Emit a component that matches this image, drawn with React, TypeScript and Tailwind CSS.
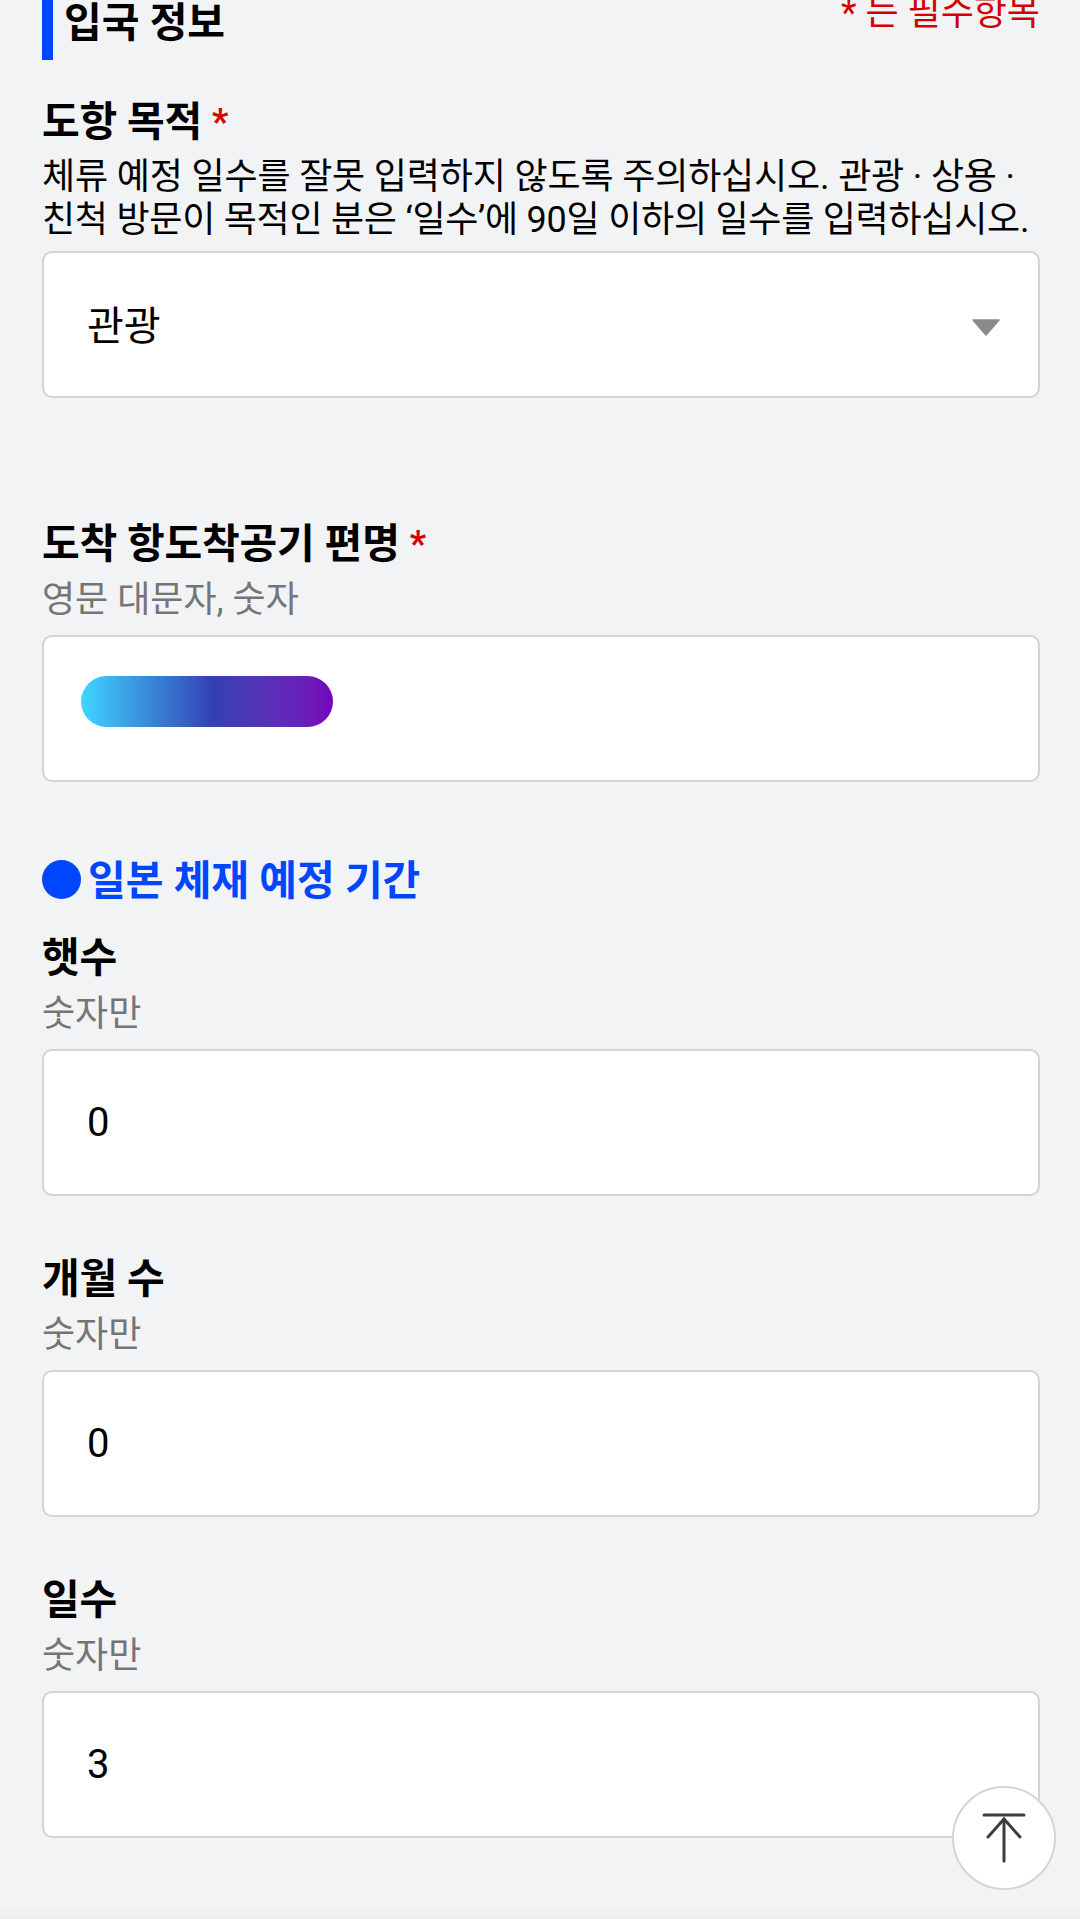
import React from 'react';

function Label({ text, required }: { text: string; required?: boolean }) {
  return (
    <div className="flex items-center h-[52px] pt-[4px] text-[41px] font-bold text-black leading-none tracking-[-0.2px]">
      <span>{text}</span>
      {required && <span className="ml-[10px] text-[36px] text-[#d40000]">*</span>}
    </div>
  );
}

function Hint({ text }: { text: string }) {
  return <div className="h-[44px] mt-[10px] mb-[13px] text-[36px] leading-[44px] text-[#757575]">{text}</div>;
}

function Field({ value, children }: { value?: string; children?: React.ReactNode }) {
  return (
    <div className="flex items-center justify-between h-[147px] pl-[43px] pr-[38px] bg-white border-2 border-[#d4d4d4] rounded-[10px] text-[40px] text-black">
      {value}
      {children}
    </div>
  );
}

export default function App() {
  return (
    <div
      className="relative h-[1919px] w-[1080px] overflow-hidden bg-[#f2f3f5] pl-[42px] pr-[40px]"
      style={{ fontFamily: 'Roboto, "Noto Sans CJK KR", sans-serif' }}
    >
      <div className="flex items-start justify-between h-[60px] mb-[34px]">
        <div className="flex h-[60px] items-start border-l-[11px] border-[#0046ff] pl-[11px]">
          <span className="text-[41px] font-bold leading-[46px] text-black">입국 정보</span>
        </div>
        <span className="text-[36px] leading-[26px] text-[#d40000]">* 는 필수항목</span>
      </div>

      <Label text="도항 목적" required />
      <div className="mb-[9px] pt-[10px] text-[36px] leading-[43px] text-black whitespace-nowrap">
        <div className="tracking-[-0.15px]">체류 예정 일수를 잘못 입력하지 않도록 주의하십시오. 관광 · 상용 ·</div>
        <div className="tracking-[-0.25px]">친척 방문이 목적인 분은 ‘일수’에 90일 이하의 일수를 입력하십시오.</div>
      </div>
      <Field>
        <span className="pt-[5px]">관광</span>
        <svg width="28" height="17" viewBox="0 0 28 17" className="mt-[6px] shrink-0">
          <path d="M1 1h26L14 16z" fill="#8a8a8a" stroke="#8a8a8a" strokeLinejoin="round" strokeWidth="1.5" />
        </svg>
      </Field>

      <div className="mt-[118px]">
        <Label text="도착 항도착공기 편명" required />
        <Hint text="영문 대문자, 숫자" />
        <Field>
          <div className="-ml-[6px] mb-[14px] h-[51px] w-[252px] rounded-full bg-gradient-to-r from-[#3fd6ff] via-[#3340b4] via-[52%] to-[#7600bb]" />
        </Field>
      </div>

      <div className="mt-[69px] mb-[23px] flex items-center text-[41px] font-bold text-[#0046ff] leading-[52px]">
        <span className="mr-[7px] h-[39px] w-[39px] rounded-full bg-[#0046ff]" />
        <span className="pt-[4px]">일본 체재 예정 기간</span>
      </div>

      <Label text="햇수" />
      <Hint text="숫자만" />
      <Field value="0" />

      <div className="mt-[55px]">
        <Label text="개월 수" />
        <Hint text="숫자만" />
        <Field value="0" />
      </div>

      <div className="mt-[55px]">
        <Label text="일수" />
        <Hint text="숫자만" />
        <Field value="3" />
      </div>

      {/* bottom edge fade */}
      <div className="absolute inset-x-0 bottom-0 h-[16px] bg-gradient-to-b from-[#f2f3f5] to-[#ecedef]" />

      {/* scroll to top */}
      <button className="absolute left-[952px] top-[1786px] flex h-[104px] w-[104px] items-center justify-center rounded-full border-2 border-[#d4d4d4] bg-white">
        <svg width="44" height="50" viewBox="0 0 44 50" fill="none" stroke="#3a3d42" strokeWidth="3" strokeLinecap="round">
          <path d="M2 2h40" />
          <path d="M22 6v42" />
          <path d="M6 24 22 6l16 18" />
        </svg>
      </button>
    </div>
  );
}
